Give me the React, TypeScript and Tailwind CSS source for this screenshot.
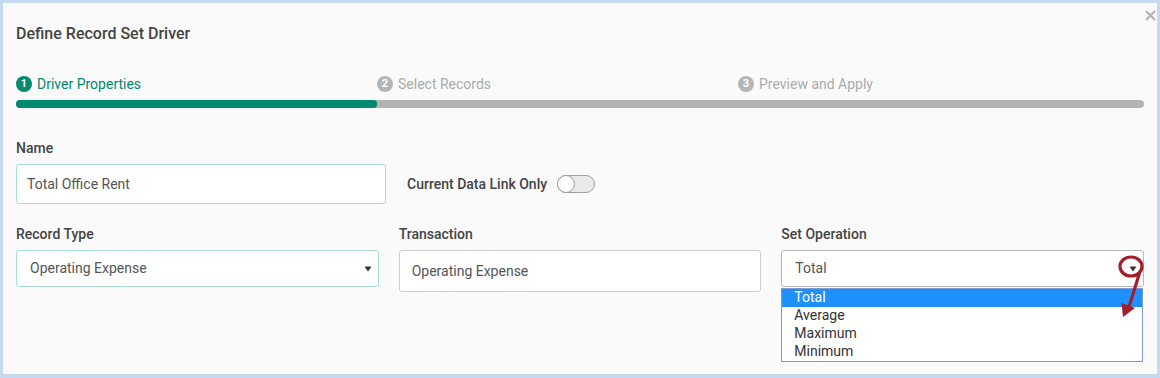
import { useState } from "react";

const steps = ["Driver Properties", "Select Records", "Preview and Apply"];
const operations = ["Total", "Average", "Maximum", "Minimum"];

function Caret() {
  return (
    <svg width="8" height="6" viewBox="0 0 8 6" className="shrink-0">
      <path d="M0.5 0.5 L7.5 0.5 L4 5.5 Z" fill="#333" />
    </svg>
  );
}

export default function App() {
  const [dataLinkOnly, setDataLinkOnly] = useState(false);

  return (
    <div className="relative w-[1160px] h-[378px] border-[3px] border-b-4 border-[#c6d9f1] bg-[#fafafa] pl-[13px] pr-[13px] pt-[21px] font-['Roboto',sans-serif] text-[#444] overflow-hidden">
      {/* Close */}
      <svg width="11" height="11" viewBox="0 0 11 11" className="absolute right-[1px] top-[7px]">
        <path d="M1 1 L10 10 M10 1 L1 10" stroke="#b5b5b5" strokeWidth="2.2" />
      </svg>

      {/* Title */}
      <h2 className="h-[20px] leading-[20px] text-[16px] font-medium text-[#444]">Define Record Set Driver</h2>

      {/* Stepper */}
      <div className="mt-[32px] flex h-[16px]">
        {steps.map((s, i) => (
          <div key={s} className="w-[361px] flex items-center gap-[5px]">
            <span
              className={`w-[16px] h-[16px] rounded-full flex items-center justify-center text-[11px] font-bold text-white ${
                i === 0 ? "bg-[#008a6e]" : "bg-[#b5b5b5]"
              }`}
            >
              {i + 1}
            </span>
            <span className={`text-[14px] leading-[16px] ${i === 0 ? "text-[#008a6e]" : "text-[#ababab]"}`}>{s}</span>
          </div>
        ))}
      </div>
      <div className="mt-[8px] h-[8px] w-[1128px] rounded-full bg-[#b3b3b3]">
        <div className="h-[8px] w-[361px] rounded-full bg-[#008a6e]" />
      </div>

      {/* Name row */}
      <label className="mt-[32px] block h-[16px] leading-[16px] text-[14px] font-medium">Name</label>
      <div className="mt-[8px] flex items-center">
        <div className="w-[370px] h-[40px] rounded-[3px] border border-[#a9ddd1] bg-white pl-[10px] flex items-center text-[14px] text-[#555]">
          Total Office Rent
        </div>
        <div className="ml-[21px] flex items-center gap-[10px]">
          <span className="text-[14px] font-medium">Current Data Link Only</span>
          <button
            type="button"
            onClick={() => setDataLinkOnly(!dataLinkOnly)}
            className="relative w-[38px] h-[18px] rounded-full border border-[#a0a0a0] bg-[#e9e9e9]"
          >
            <span className="absolute left-[-1px] top-[-1px] w-[18px] h-[18px] rounded-full border border-[#999] bg-white" />
          </button>
        </div>
      </div>

      {/* Second row */}
      <div className="mt-[22px] grid grid-cols-3 gap-x-5 w-[1128px]">
        <div>
          <label className="block h-[16px] leading-[16px] text-[14px] font-medium">Record Type</label>
          <div className="mt-[8px] h-[37px] rounded-[3px] border border-[#a9ddd1] bg-white pl-[13px] pr-[6px] flex items-center justify-between text-[14px] text-[#555]">
            <span>Operating Expense</span>
            <Caret />
          </div>
        </div>
        <div>
          <label className="block h-[16px] leading-[16px] text-[14px] font-medium">Transaction</label>
          <div className="mt-[8px] h-[42px] rounded-[3px] border border-[#cfcfcf] bg-white pl-[12px] flex items-center text-[14px] text-[#555]">
            Operating Expense
          </div>
        </div>
        <div className="relative">
          <label className="block h-[16px] leading-[16px] text-[14px] font-medium">Set Operation</label>
          <div className="mt-[8px] h-[37px] rounded-[3px] border border-[#b8b8b8] bg-white pl-[13px] pr-[6px] flex items-center justify-between text-[14px] text-[#555]">
            <span>Total</span>
            <Caret />
          </div>
          {/* Open dropdown list */}
          <ul className="absolute left-0 top-[62px] w-[362px] border border-[#7b9bd1] bg-white z-10">
            {operations.map((op, i) => (
              <li
                key={op}
                className={`h-[18px] leading-[17px] pl-[12px] text-[14px] ${
                  i === 0 ? "bg-[#1e90ff] text-white" : "text-[#333]"
                }`}
              >
                {op}
              </li>
            ))}
          </ul>
        </div>
      </div>

      {/* Annotation */}
      <svg width="50" height="80" viewBox="0 0 50 80" className="absolute left-[1107px] top-[247px] z-20">
        <ellipse cx="21" cy="16.5" rx="11" ry="9.5" fill="none" stroke="#a31d2b" strokeWidth="3.2" />
        <path d="M29.5 23 L19 57" stroke="#a31d2b" strokeWidth="3.2" fill="none" strokeLinecap="round" />
        <path d="M13 67 L11.5 53 L25 58 Z" fill="#a31d2b" />
      </svg>
    </div>
  );
}
